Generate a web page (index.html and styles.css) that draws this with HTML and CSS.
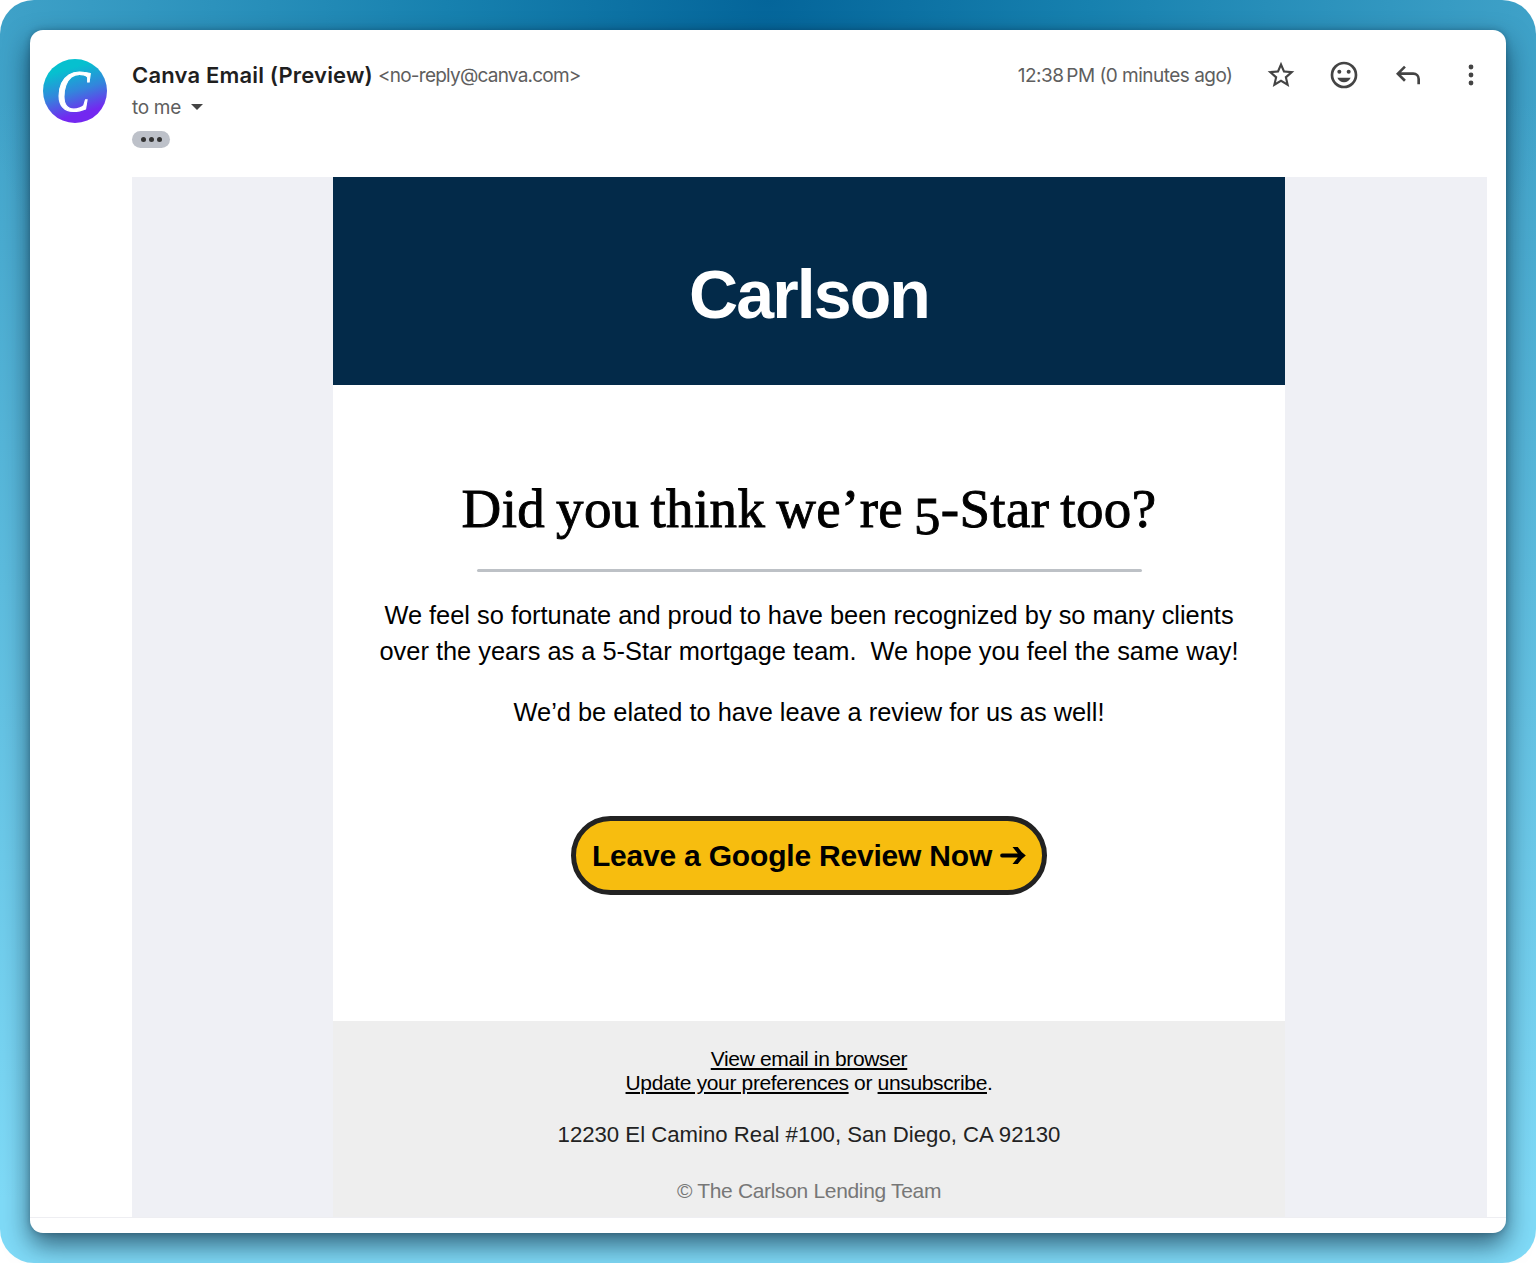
FILE: index.html
```html
<!DOCTYPE html>
<html lang="en">
<head>
  <meta charset="UTF-8">
  <meta name="viewport" content="width=device-width, initial-scale=1.0">
  <title>Canva Email (Preview)</title>
  <link rel="stylesheet" href="styles.css">
</head>
<body>
  <div class="backdrop">
    <main class="window">
      <header class="mail-header">
        <svg class="avatar" viewBox="0 0 64 64">
          <defs>
            <linearGradient id="avatarFill" x1="0.35" y1="0" x2="0.65" y2="1">
              <stop offset="0.15" stop-color="#06c0cf"/>
              <stop offset="0.5" stop-color="#3385dc"/>
              <stop offset="0.85" stop-color="#7328f0"/>
            </linearGradient>
          </defs>
          <circle cx="32" cy="32" r="32" fill="url(#avatarFill)"/>
          <text class="avatar-letter" transform="translate(30 51.500) scale(0.84 1)" text-anchor="middle">C</text>
        </svg>

        <div class="sender">
          <div class="from"><strong>Canva Email (Preview)</strong><span class="address">&lt;no-reply@canva.com&gt;</span></div>
          <div class="to">to me <span class="caret"></span></div>
          <div class="more"><i></i><i></i><i></i></div>
        </div>

        <div class="meta">
          <span class="date">12:38&#8201;PM (0 minutes ago)</span>
          <svg class="icon" viewBox="0 0 24 24"><path d="M22 9.24l-7.19-.62L12 2 9.19 8.63 2 9.24l5.46 4.73L5.82 21 12 17.27 18.18 21l-1.63-7.03L22 9.24zM12 15.4l-3.76 2.27 1-4.28-3.32-2.88 4.38-.38L12 6.1l1.71 4.04 4.38.38-3.32 2.88 1 4.28L12 15.4z"/></svg>
          <svg class="icon" viewBox="0 0 24 24"><path d="M12 2a10 10 0 1 0 0 20 10 10 0 0 0 0-20zm0 18a8 8 0 1 1 0-16 8 8 0 0 1 0 16z"/><circle cx="8.5" cy="9.5" r="1.5"/><circle cx="15.5" cy="9.5" r="1.5"/><path d="M7 14h10c-.8 2-2.700 3.500-5 3.500S7.800 16 7 14z"/></svg>
          <svg class="icon" viewBox="0 0 24 24"><path d="M19 19v-4a3 3 0 0 0-3-3H6.800l3.600 3.600L9 17l-6-6 6-6 1.400 1.400L6.800 10H16a5 5 0 0 1 5 5v4z"/></svg>
          <svg class="icon" viewBox="0 0 24 24"><circle cx="12" cy="6" r="1.800"/><circle cx="12" cy="12" r="1.800"/><circle cx="12" cy="18" r="1.800"/></svg>
        </div>
      </header>

      <div class="mail-body">
        <article class="email">
          <div class="banner">Carlson</div>

          <section class="content">
            <h1>Did you think we’re <span class="oldstyle">5</span>-Star too?</h1>
            <hr>
            <p class="intro">We feel so fortunate and proud to have been recognized by so many clients<br>over the years as a 5-Star mortgage team.&nbsp; We hope you feel the same way!</p>
            <p class="ask">We’d be elated to have leave a review for us as well!</p>
            <a class="review-btn" href="#">
              <span>Leave a Google Review Now</span>
              <svg viewBox="0 0 27 20"><path d="M2 8h16.500L13 1h5.500q3.500 5.500 8.500 9-5 3.500-8.500 9H13l5.500-7H2a2 2 0 0 1 0-4z"/></svg>
            </a>
          </section>

          <footer class="email-footer">
            <p class="links"><a href="#">View email in browser</a><br><a href="#">Update your preferences</a> or <a href="#">unsubscribe</a>.</p>
            <p class="postal">12230 El Camino Real #100, San Diego, CA 92130</p>
            <p class="copyright">© The Carlson Lending Team</p>
          </footer>
        </article>
      </div>
      <div class="mail-end"></div>
    </main>
  </div>
</body>
</html>
```
FILE: styles.css
```css
* {
  box-sizing: border-box;
}
body {
  margin: 0;
  background: #fff;
  font-family: "Liberation Sans", Arial, sans-serif;
}
h1, p {
  margin: 0;
}
.backdrop {
  height: 1263px;
  padding: 30px;
  border-radius: 34px;
  background:
    radial-gradient(ellipse 800px 600px at 50% 0, #04659a 0%, rgba(12, 120, 168, 0.8) 40%, rgba(68, 166, 204, 0) 100%),
    linear-gradient(#42a4ca 8%, #7fdaf7 95%);
}
.window {
  height: 1203px;
  border-radius: 13px;
  background: #fff;
  box-shadow: 0 12px 26px rgba(0, 20, 40, 0.6), 0 0 6px rgba(0, 20, 40, 0.25);
}

/* message header */
.mail-header {
  display: flex;
  height: 147px;
  padding: 29px 19px 0 13px;
  font-family: Inter, Roboto, sans-serif;
}
.avatar {
  width: 64px;
  height: 64px;
  margin-right: 25px;
  overflow: visible;
}
.avatar-letter {
  font: italic 60px "Liberation Serif", serif;
  fill: #fff;
  stroke: #fff;
  stroke-width: 1.200px;
}
.sender {
  flex: 1;
}
.from {
  display: flex;
  align-items: center;
  height: 32px;
  white-space: nowrap;
}
.from strong {
  font-size: 22px;
  font-weight: 600;
  letter-spacing: 0.180px;
  color: #1f1f1f;
}
.address {
  margin-left: 5px;
  font-size: 19px;
  letter-spacing: -0.770px;
  color: #5e5e5e;
}
.to {
  display: flex;
  align-items: center;
  height: 32px;
  font-size: 19px;
  letter-spacing: -0.300px;
  color: #5e5e5e;
}
.caret {
  margin-left: 10px;
  border: 6px solid transparent;
  border-top-color: #444;
  border-bottom: 0;
}
.more {
  display: flex;
  align-items: center;
  justify-content: center;
  gap: 3px;
  width: 38px;
  height: 17px;
  margin-top: 8px;
  border-radius: 9px;
  background: #bdc1c9;
}
.more i {
  width: 5px;
  height: 5px;
  border-radius: 50%;
  background: #333;
}
.meta {
  display: flex;
  align-items: center;
  height: 32px;
}
.date {
  font-size: 19px;
  letter-spacing: -0.520px;
  color: #5e5e5e;
  white-space: nowrap;
  margin-right: 32px;
}
.icon {
  width: 32px;
  height: 32px;
  margin-right: 31.500px;
  fill: #444;
}
.icon:last-child {
  margin-right: 0;
}

/* message body */
.mail-body {
  margin: 0 19px 0 102px;
  background: #eff0f5;
}
.mail-end {
  height: 1px;
  background: #eeeef2;
}
.email {
  width: 952px;
  margin-left: 201px;
}
.banner {
  height: 208px;
  padding-top: 77px;
  background: #032a49;
  color: #fff;
  font-size: 68px;
  font-weight: bold;
  letter-spacing: -1.900px;
  line-height: 80px;
  text-align: center;
}
.content {
  display: flex;
  flex-direction: column;
  align-items: center;
  height: 636px;
  padding-top: 92px;
  background: #fff;
  text-align: center;
  color: #000;
}
h1 {
  font-family: Georgia, "Liberation Serif", serif;
  font-size: 55px;
  font-weight: 400;
  line-height: 64px;
  letter-spacing: 0.350px;
  word-spacing: -3.200px;
  white-space: nowrap;
  -webkit-text-stroke: 0.900px #000;
}
.oldstyle {
  font-size: 0.960em;
  line-height: 0;
  vertical-align: -0.130em;
}
hr {
  width: 665px;
  height: 3px;
  margin: 28px 0 0;
  border: 0;
  border-radius: 2px;
  background: #bdc1c6;
}
.intro, .ask {
  font-size: 25.400px;
  line-height: 36px;
  white-space: nowrap;
}
.intro {
  margin-top: 25px;
}
.ask {
  margin-top: 25px;
}
.review-btn {
  display: flex;
  align-items: center;
  justify-content: center;
  gap: 8px;
  width: 476px;
  height: 79px;
  margin-top: 86px;
  border: 5px solid #222;
  border-radius: 40px;
  background: #f7bd0f;
  color: #000;
  font-size: 30px;
  font-weight: bold;
  letter-spacing: -0.200px;
  text-decoration: none;
  white-space: nowrap;
}
.review-btn svg {
  width: 26px;
  height: 19px;
}
.email-footer {
  height: 196px;
  padding-top: 26px;
  background: #eee;
  text-align: center;
}
.links {
  font-size: 21px;
  letter-spacing: -0.350px;
  line-height: 24px;
  color: #000;
}
.links a {
  color: #000;
  text-underline-offset: 2px;
}
.postal {
  margin-top: 26px;
  font-size: 22.180px;
  line-height: 28px;
  color: #222;
}
.copyright {
  margin-top: 28px;
  font-size: 21px;
  letter-spacing: -0.330px;
  line-height: 28px;
  color: #777;
}
```
